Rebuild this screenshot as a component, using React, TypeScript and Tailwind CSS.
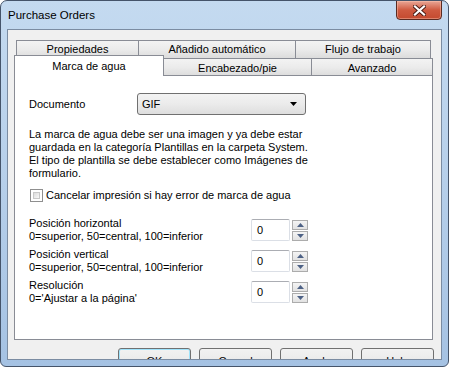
import React from "react";

function Up() {
  return (
    <svg width="7" height="4" viewBox="0 0 7 4">
      <path d="M0 4 L3.5 0 L7 4Z" fill="#4d6185" />
    </svg>
  );
}

function Down() {
  return (
    <svg width="7" height="4" viewBox="0 0 7 4">
      <path d="M0 0 L7 0 L3.5 4Z" fill="#4d6185" />
    </svg>
  );
}

function Spin({ value }: { value: string }) {
  return (
    <div className="mt-[2px] flex gap-[2px]">
      <div className="flex h-[22px] w-[39px] items-center rounded-[2px] border border-[#dbdfe6] border-t-[#abadb3] bg-white pl-[5px]">
        {value}
      </div>
      <div className="mt-[1px] flex flex-col gap-[1px]">
        <div className="flex h-[10px] w-[16px] items-center justify-center border border-[#acacac] bg-gradient-to-b from-[#f4f4f4] to-[#e2e2e2]">
          <Up />
        </div>
        <div className="flex h-[10px] w-[16px] items-center justify-center border border-[#acacac] bg-gradient-to-b from-[#f4f4f4] to-[#e2e2e2]">
          <Down />
        </div>
      </div>
    </div>
  );
}

const backTab =
  "flex h-[18px] items-center justify-center border border-b-0 border-[#898c95] bg-gradient-to-b from-[#f3f3f3] via-[#ebebeb] to-[#dcdcdc]";

const btn =
  "flex h-[23px] w-[73px] shrink-0 justify-center rounded-[3px] border border-[#707070] bg-gradient-to-b from-[#f2f2f2] via-[#ebebeb] to-[#d4d4d4] pt-[4px]";

export default function App() {
  return (
    <div className="h-[367px] w-[449px] bg-white font-['Liberation_Sans',Arial,sans-serif] text-[11px] text-black">
      <div className="flex h-full w-full flex-col overflow-hidden rounded-t-[7px] rounded-b-[6px] border border-[#45546a] bg-gradient-to-b from-[#c4daf0] via-[#b6cfea] to-[#a5c2e3]">
        {/* title bar */}
        <div className="flex h-[28px] shrink-0 items-start justify-between">
          <span className="pl-[7px] pt-[7px] text-[11.5px] leading-[14px]">Purchase Orders</span>
          <div className="mr-[6px] -mt-px flex h-[20px] w-[46px] items-center justify-center rounded-b-[4px] border border-[#5a2b22] bg-gradient-to-b from-[#e8a696] via-[#cf5a40] to-[#c44a2f] shadow-[inset_0_0_0_1px_rgba(255,200,180,0.45)]">
            <svg width="13" height="11" viewBox="0 0 13 11">
              <path
                d="M2 1.5 L11 9.5 M11 1.5 L2 9.5"
                stroke="#4a1b14"
                strokeWidth="4"
                strokeLinecap="square"
              />
              <path
                d="M2 1.5 L11 9.5 M11 1.5 L2 9.5"
                stroke="#ffffff"
                strokeWidth="2.2"
                strokeLinecap="square"
              />
            </svg>
          </div>
        </div>

        {/* client area */}
        <div className="mx-[6px] flex h-[331px] shrink-0 flex-col overflow-hidden border border-[#7b8ca2] bg-[#f0f0f0] pt-[10px]">
          {/* back row of tabs */}
          <div className="ml-[8px] flex h-[18px]">
            <div className={`${backTab} w-[123px]`}>Propiedades</div>
            <div className={`${backTab} -ml-px w-[158px]`}>Añadido automático</div>
            <div className={`${backTab} -ml-px w-[136px]`}>Flujo de trabajo</div>
          </div>
          {/* front row of tabs */}
          <div className="ml-[6px] flex h-[17px] items-start">
            <div className="relative z-10 -mt-[3px] flex h-[21px] w-[150px] justify-center border border-b-0 border-[#898c95] bg-white pt-[2px]">
              Marca de agua
            </div>
            <div className={`${backTab} -ml-px h-[17px] w-[149px] pt-[1px]`}>Encabezado/pie</div>
            <div className={`${backTab} -ml-px h-[17px] w-[122px] pt-[1px]`}>Avanzado</div>
          </div>

          {/* panel */}
          <div className="ml-[6px] flex h-[265px] w-[419px] shrink-0 flex-col border border-[#898c95] bg-white pl-[14px] pt-[17px] leading-[13px]">
            <div className="flex h-[22px] items-center">
              <span className="w-[108px]">Documento</span>
              <div className="flex h-[22px] w-[169px] items-center justify-between rounded-[3px] border border-[#707070] bg-gradient-to-b from-[#f3f3f3] via-[#ebebeb] to-[#dedede] pl-[4px] pr-[8px]">
                <span>GIF</span>
                <svg width="7" height="4" viewBox="0 0 7 4">
                  <path d="M0 0 L7 0 L3.5 4Z" fill="#000" />
                </svg>
              </div>
            </div>

            <p className="mt-[13px] whitespace-nowrap">
              La marca de agua debe ser una imagen y ya debe estar
              <br />
              guardada en la categoría Plantillas en la carpeta System.
              <br />
              El tipo de plantilla se debe establecer como Imágenes de
              <br />
              formulario.
            </p>

            <div className="mt-[9px] flex h-[13px] items-center gap-[3px]">
              <div className="ml-[1px] h-[13px] w-[13px] border border-[#8f8f8f] bg-white p-[2px]">
                <div className="h-full w-full border border-[#c8c8c8] bg-gradient-to-br from-[#dcdcdc] to-[#f8f8f8]" />
              </div>
              <span>Cancelar impresión si hay error de marca de agua</span>
            </div>

            <div className="mt-[15px] flex">
              <div className="w-[222px]">
                Posición horizontal
                <br />
                0=superior, 50=central, 100=inferior
              </div>
              <Spin value="0" />
            </div>
            <div className="mt-[5px] flex">
              <div className="w-[222px]">
                Posición vertical
                <br />
                0=superior, 50=central, 100=inferior
              </div>
              <Spin value="0" />
            </div>
            <div className="mt-[5px] flex">
              <div className="w-[222px]">
                Resolución
                <br />
                0='Ajustar a la página'
              </div>
              <Spin value="0" />
            </div>
          </div>

          {/* buttons */}
          <div className="mt-[8px] flex justify-end gap-[8px] pr-[7px]">
            <div className={`${btn} border-[#3c7fb1] shadow-[inset_0_0_0_1px_#9fe3fb]`}>OK</div>
            <div className={btn}>Cancel</div>
            <div className={btn}>Apply</div>
            <div className={btn}>Help</div>
          </div>
        </div>
      </div>
    </div>
  );
}
